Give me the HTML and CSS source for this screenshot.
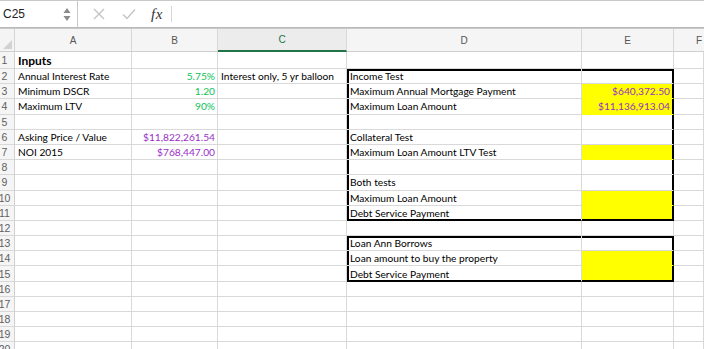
FILE: index.html
```html
<!DOCTYPE html>
<html>
<head>
<meta charset="utf-8">
<link rel="stylesheet" href="styles.css">
</head>
<body>
<div class="toolbar">
  <div class="namebox">
    <span class="ref">C25</span>
    <svg class="spin" width="8" height="16" viewBox="0 0 8 16"><path d="M4 2 L7.5 7 L0.5 7 Z" fill="#8a8a8a"/><path d="M0.5 10 L7.5 10 L4 15 Z" fill="#8a8a8a"/></svg>
  </div>
  <div class="fbar">
    <svg class="ico" width="12" height="12" viewBox="0 0 12 12"><path d="M1 1 L11 11 M11 1 L1 11" stroke="#c4c4c4" stroke-width="1.4" fill="none"/></svg>
    <svg class="ico ok" width="14" height="12" viewBox="0 0 14 12"><path d="M1 6.5 L5 10.5 L13 1.5" stroke="#c4c4c4" stroke-width="1.4" fill="none"/></svg>
    <span class="fx">fx</span>
    <span class="sep"></span>
  </div>
</div>
<div class="sheet">
  <div class="corner"></div><div class="ch">A</div><div class="ch">B</div><div class="ch sel">C</div><div class="ch">D</div><div class="ch">E</div><div class="ch last">F</div>

  <div class="rh">1</div><div class="c bold">Inputs</div><div class="c"></div><div class="c"></div><div class="c"></div><div class="c"></div><div class="c"></div>
  <div class="rh">2</div><div class="c">Annual Interest Rate</div><div class="c num green">5.75%</div><div class="c">Interest only, 5 yr balloon</div><div class="c ktl">Income Test</div><div class="c ktr"></div><div class="c"></div>
  <div class="rh">3</div><div class="c">Minimum DSCR</div><div class="c num green">1.20</div><div class="c"></div><div class="c kl">Maximum Annual Mortgage Payment</div><div class="c num purple yel kr">$640,372.50</div><div class="c"></div>
  <div class="rh">4</div><div class="c">Maximum LTV</div><div class="c num green">90%</div><div class="c"></div><div class="c kl">Maximum Loan Amount</div><div class="c num purple yel kr">$11,136,913.04</div><div class="c"></div>
  <div class="rh">5</div><div class="c"></div><div class="c"></div><div class="c"></div><div class="c kl"></div><div class="c kr"></div><div class="c"></div>
  <div class="rh">6</div><div class="c">Asking Price / Value</div><div class="c num purple">$11,822,261.54</div><div class="c"></div><div class="c kl">Collateral Test</div><div class="c kr"></div><div class="c"></div>
  <div class="rh">7</div><div class="c">NOI 2015</div><div class="c num purple">$768,447.00</div><div class="c"></div><div class="c kl">Maximum Loan Amount LTV Test</div><div class="c yel kr"></div><div class="c"></div>
  <div class="rh">8</div><div class="c"></div><div class="c"></div><div class="c"></div><div class="c kl"></div><div class="c kr"></div><div class="c"></div>
  <div class="rh">9</div><div class="c"></div><div class="c"></div><div class="c"></div><div class="c kl">Both tests</div><div class="c kr"></div><div class="c"></div>
  <div class="rh">10</div><div class="c"></div><div class="c"></div><div class="c"></div><div class="c kl">Maximum Loan Amount</div><div class="c yel kr"></div><div class="c"></div>
  <div class="rh">11</div><div class="c"></div><div class="c"></div><div class="c"></div><div class="c kbl">Debt Service Payment</div><div class="c yel kbr"></div><div class="c"></div>
  <div class="rh">12</div><div class="c"></div><div class="c"></div><div class="c"></div><div class="c"></div><div class="c"></div><div class="c"></div>
  <div class="rh">13</div><div class="c"></div><div class="c"></div><div class="c"></div><div class="c ktl">Loan Ann Borrows</div><div class="c ktr"></div><div class="c"></div>
  <div class="rh">14</div><div class="c"></div><div class="c"></div><div class="c"></div><div class="c kl">Loan amount to buy the property</div><div class="c yel kr"></div><div class="c"></div>
  <div class="rh">15</div><div class="c"></div><div class="c"></div><div class="c"></div><div class="c kbl">Debt Service Payment</div><div class="c yel kbr"></div><div class="c"></div>
  <div class="rh">16</div><div class="c"></div><div class="c"></div><div class="c"></div><div class="c"></div><div class="c"></div><div class="c"></div>
  <div class="rh">17</div><div class="c"></div><div class="c"></div><div class="c"></div><div class="c"></div><div class="c"></div><div class="c"></div>
  <div class="rh">18</div><div class="c"></div><div class="c"></div><div class="c"></div><div class="c"></div><div class="c"></div><div class="c"></div>
  <div class="rh">19</div><div class="c"></div><div class="c"></div><div class="c"></div><div class="c"></div><div class="c"></div><div class="c"></div>
  <div class="rh">20</div><div class="c"></div><div class="c"></div><div class="c"></div><div class="c"></div><div class="c"></div><div class="c"></div>
</div>
</body>
</html>
```
FILE: styles.css
```css
* { box-sizing: border-box; }
html, body { margin: 0; padding: 0; background: #fff; overflow: hidden; }
body { width: 704px; height: 349px; font-family: "Lato", "Liberation Sans", sans-serif; }

.toolbar {
  height: 28px;
  display: flex;
  border-top: 1px solid #c9c9c9;
  border-bottom: 1px solid #b9b9b9;
  background: #fff;
}
.namebox {
  width: 78px;
  display: flex;
  align-items: center;
  justify-content: space-between;
  padding: 0 6px 0 3px;
  border-right: 1px solid #c9c9c9;
}
.ref { font-family: "Liberation Sans", sans-serif; font-size: 12px; color: #222; }
.spin { display: block; }
.fbar { flex: 1; display: flex; align-items: center; padding-left: 15px; }
.ico { display: block; }
.ok { margin-left: 17px; }
.fx { margin-left: 15px; font-family: "Liberation Serif", serif; font-style: italic; font-size: 15px; color: #333; letter-spacing: 0.5px; }
.sep { margin-left: 8px; width: 1px; height: 16px; background: #d6d6d6; }

.sheet {
  display: grid;
  grid-template-columns: 15px 117px 86px 129px 235px 92px 30px;
  grid-template-rows: 23px 17px repeat(19, 15.2px);
  border-top: 1px solid #c9c9c9;
}
.corner {
  background: #f4f4f4;
  border-right: 1px solid #d4d4d4;
  border-bottom: 1px solid #cfcfcf;
  position: relative;
}
.corner::after {
  content: "";
  position: absolute;
  right: 2px; bottom: 2px;
  border-style: solid;
  border-width: 0 0 9px 9px;
  border-color: transparent transparent #d2d2d2 transparent;
}
.ch {
  background: #f5f5f5;
  border-right: 1px solid #d8d8d8;
  border-bottom: 1px solid #cfcfcf;
  font-family: "Liberation Sans", sans-serif;
  font-size: 10px;
  color: #555;
  display: flex;
  align-items: center;
  justify-content: center;
}
.ch.sel { background: #ececec; color: #217346; border-bottom: 2px solid #217346; }
.ch.last { justify-content: flex-start; padding-left: 22px; border-right: none; }

.rh {
  background: #f5f5f5;
  border-right: 1px solid #d0d0d0;
  border-bottom: 1px solid #d8d8d8;
  font-family: "Liberation Sans", sans-serif;
  font-size: 10.5px;
  color: #5f5f5f;
  display: flex;
  align-items: center;
  justify-content: center;
  padding-right: 5px;
  white-space: nowrap;
}

.c {
  border-right: 1px solid #d9d9d9;
  border-bottom: 1px solid #d9d9d9;
  font-size: 10.2px;
  color: #000;
  padding: 0 2px 0 3px;
  display: flex;
  align-items: center;
  white-space: nowrap;
  overflow: hidden;
}
.bold { font-weight: bold; font-size: 12px; }
.num { justify-content: flex-end; }
.green { color: #0dc35a; }
.purple { color: #9a2fc8; }
.yel { background: #ffff00; border-color: #ffff00; }

/* thick outline borders, as Excel cell borders */
.kl { box-shadow: inset 2px 0 0 #000; }
.kr { border-right-color: #000; box-shadow: inset -1px 0 0 #000; padding-right: 3px; }
.ktl { box-shadow: inset 2px 0 0 #000, inset 0 2px 0 #000; }
.ktr { border-right-color: #000; box-shadow: inset -1px 0 0 #000, inset 0 2px 0 #000; }
.kbl { border-bottom-color: #000; box-shadow: inset 2px 0 0 #000, inset 0 -1px 0 #000; }
.kbr { border-right-color: #000; border-bottom-color: #000; box-shadow: inset -1px 0 0 #000, inset 0 -1px 0 #000; }
```
